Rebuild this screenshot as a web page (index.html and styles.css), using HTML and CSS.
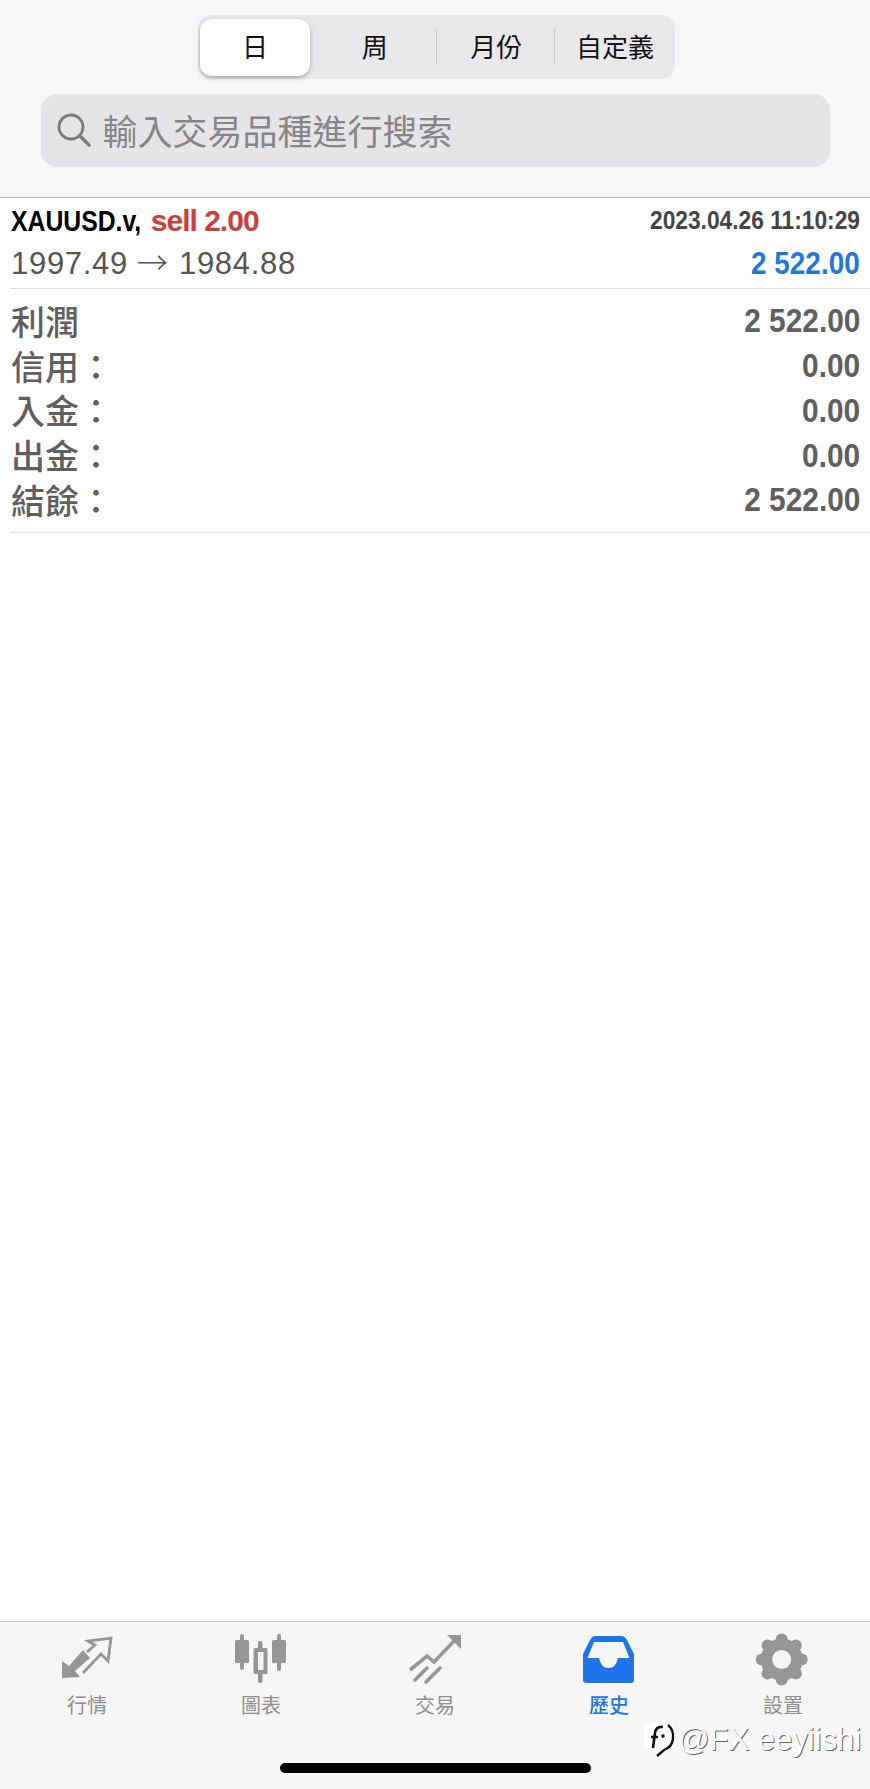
FILE: index.html
```html
<!DOCTYPE html>
<html lang="zh-Hant">
<head>
    <meta charset="UTF-8">
    <meta name="viewport" content="width=device-width, initial-scale=1.0">
    <title>歷史</title>
    <link rel="stylesheet" href="styles.css">
</head>
<body>
    <!-- Period switch and search -->
    <div class="top-bar">
        <div class="segments">
            <div class="segment active">日</div>
            <div class="segment">周</div>
            <div class="segment split">月份</div>
            <div class="segment split">自定義</div>
        </div>
        <div class="search-box">
            <svg class="search-icon" viewBox="0 0 40 40">
                <circle cx="17" cy="16" r="12" fill="none" stroke="#7b7b7b" stroke-width="2.8"/>
                <line x1="26" y1="25" x2="35" y2="34" stroke="#7b7b7b" stroke-width="3.4" stroke-linecap="round"/>
            </svg>
            <span class="search-text">輸入交易品種進行搜索</span>
        </div>
    </div>

    <div class="history-list">
        <div class="trade">
            <div class="row">
                <div class="symbol"><span class="pair">XAUUSD.v,</span><span class="sell">sell 2.00</span></div>
                <div class="date">2023.04.26 11:10:29</div>
            </div>
            <div class="row">
                <div class="prices">1997.49<span class="arrow">→</span>1984.88</div>
                <div class="profit">2 522.00</div>
            </div>
        </div>
        <div class="summary">
            <div class="sum-row"><span class="sum-label">利潤</span><span class="sum-value">2 522.00</span></div>
            <div class="sum-row"><span class="sum-label">信用：</span><span class="sum-value">0.00</span></div>
            <div class="sum-row"><span class="sum-label">入金：</span><span class="sum-value">0.00</span></div>
            <div class="sum-row"><span class="sum-label">出金：</span><span class="sum-value">0.00</span></div>
            <div class="sum-row"><span class="sum-label">結餘：</span><span class="sum-value">2 522.00</span></div>
        </div>
    </div>

    <!-- Bottom navigation -->
    <div class="tab-bar">
        <div class="tabs">
            <div class="tab">
                <svg class="tab-icon" viewBox="-3 0 80 65">
                    <path d="M12 36V53L30 52L25 46L40 33L33 25L19 41Z" fill="#969696"/>
                    <path d="M37 27L45 20L38 16L61 13L58 36L51 29L33 48" fill="none" stroke="#969696" stroke-width="2.8"/>
                </svg>
                <span class="tab-label">行情</span>
            </div>
            <div class="tab">
                <svg class="tab-icon" viewBox="1 0 80 65">
                    <rect x="20" y="9" width="4" height="36" rx="2" fill="#969696"/>
                    <rect x="15" y="15" width="14" height="23" rx="1.5" fill="#969696"/>
                    <rect x="38" y="16" width="4.500" height="42" rx="2" fill="#969696"/>
                    <rect x="33.500" y="23" width="14" height="26" rx="1.500" fill="#969696"/>
                    <rect x="38" y="27" width="5.500" height="18" fill="#f6f6f6"/>
                    <rect x="57" y="9" width="4" height="37" rx="2" fill="#969696"/>
                    <rect x="52" y="15" width="14" height="23" rx="1.500" fill="#969696"/>
                </svg>
                <span class="tab-label">圖表</span>
            </div>
            <div class="tab">
                <svg class="tab-icon" viewBox="0 0 80 65">
                    <path d="M15 45L32 31L39 37L60 15" fill="none" stroke="#969696" stroke-width="3.600"/>
                    <path d="M52 10H66V24Z" fill="#969696"/>
                    <path d="M20 55L32 43M31 57L45 43" fill="none" stroke="#969696" stroke-width="3.600" stroke-linecap="round"/>
                </svg>
                <span class="tab-label">交易</span>
            </div>
            <div class="tab">
                <svg class="tab-icon" viewBox="-1 0 80 65">
                    <path fill="#1f74ea" fill-rule="evenodd" d="M26 11H51Q55 11 57 15L64 29V55Q64 58 61 58H16Q13 58 13 55V29L20 15Q22 11 26 11ZM24 17L17.500 33H29Q31 43 38.500 43Q46 43 48 33H59.500L53 17Z"/>
                </svg>
                <span class="tab-label active">歷史</span>
            </div>
            <div class="tab">
                <svg class="tab-icon" viewBox="2 0 80 65">
                    <g fill="#969696">
                        <circle cx="40.700" cy="34.500" r="21"/>
                        <circle cx="40.700" cy="14.500" r="6"/>
                        <circle cx="40.700" cy="54.500" r="6"/>
                        <circle cx="20.700" cy="34.500" r="6"/>
                        <circle cx="60.700" cy="34.500" r="6"/>
                        <circle cx="26.600" cy="20.400" r="6"/>
                        <circle cx="54.800" cy="20.400" r="6"/>
                        <circle cx="26.600" cy="48.600" r="6"/>
                        <circle cx="54.800" cy="48.600" r="6"/>
                    </g>
                    <circle cx="40.700" cy="34.500" r="9.500" fill="#f6f6f6"/>
                </svg>
                <span class="tab-label">設置</span>
            </div>
        </div>
        <div class="home-bar"></div>
    </div>

    <!-- Watermark over the tab bar -->
    <div class="watermark">
        <svg class="watermark-logo" viewBox="0 0 34 36">
            <path d="M9 1H24Q32 1 32 11V17Q32 27 21 29L12 35L13 29H9Q1 29 1 20V9Q1 1 9 1Z" fill="#fff"/>
            <path d="M25 3Q31 8 30 17Q29 25 21 28L14 34" fill="none" stroke="#111" stroke-width="2.400"/>
            <path d="M8 15H15M20 5Q13 4 12 11L10 26" fill="none" stroke="#111" stroke-width="2.600"/>
            <circle cx="20" cy="14" r="1.800" fill="#111"/>
        </svg>
        <span class="watermark-text">@FX eeyiishi</span>
    </div>
</body>
</html>
```

FILE: styles.css
```css
html, body {
    margin: 0;
    padding: 0;
}

body {
    position: relative;
    display: flex;
    flex-direction: column;
    width: 870px;
    height: 1789px;
    overflow: hidden;
    background-color: #ffffff;
    font-family: "Liberation Sans", "Noto Sans CJK TC", sans-serif;
}

/* Top bar */
.top-bar {
    display: flex;
    flex-direction: column;
    align-items: center;
    height: 198px;
    padding-top: 15px;
    box-sizing: border-box;
    background-color: #f7f7f7;
    border-bottom: 1px solid #b9b9b9;
}

.segments {
    display: flex;
    align-items: center;
    width: 477px;
    height: 64px;
    padding: 0 2px;
    box-sizing: border-box;
    background-color: #e8e8ea;
    border-radius: 14px;
    margin-left: 3px;
}

.segment {
    position: relative;
    width: 120px;
    height: 57px;
    line-height: 53px;
    text-align: center;
    font-family: "Noto Sans CJK TC", sans-serif;
    font-size: 26px;
    color: #111111;
}

.segment.active {
    width: 110px;
    background-color: #ffffff;
    border-radius: 12px;
    box-shadow: 0 2px 4px rgba(0, 0, 0, 0.28);
}

.segment:nth-child(2) {
    width: 126px;
    padding-left: 4px;
    box-sizing: border-box;
}

.segment.split {
    width: 119px;
    padding-left: 3px;
    box-sizing: border-box;
}

.segment.split::before {
    content: "";
    position: absolute;
    left: 0;
    top: 10px;
    width: 1px;
    height: 35px;
    background-color: #c9c9cb;
}

.search-box {
    display: flex;
    align-items: center;
    width: 789px;
    height: 73px;
    margin-top: 15px;
    padding-left: 13px;
    box-sizing: border-box;
    background-color: #e5e5e7;
    border-radius: 16px;
}

.search-icon {
    width: 40px;
    height: 40px;
    flex: none;
}

.search-text {
    margin-left: 9px;
    padding-bottom: 3px;
    font-family: "Noto Sans CJK TC", sans-serif;
    font-size: 35px;
    color: #868688;
}

/* History list */
.history-list {
    flex: 1;
    background-color: #ffffff;
}

.trade {
    margin-left: 10px;
    height: 90px;
    border-bottom: 1px solid #dedede;
}

.row {
    display: flex;
    justify-content: space-between;
    align-items: center;
    height: 44px;
    padding: 0 10px 0 1px;
}

.symbol {
    padding-top: 2px;
    font-size: 30px;
    font-weight: bold;
    color: #000000;
}

/* the symbol, date and amounts are set narrower than the font's own width */
.pair {
    display: inline-block;
    margin-right: -18px;
    transform: scaleX(0.825);
    transform-origin: left center;
}

.sell {
    color: #cb4139;
    letter-spacing: -1px;
}

.date {
    font-size: 26px;
    font-weight: bold;
    color: #444444;
    transform: scaleX(0.875);
    transform-origin: right center;
}

.prices {
    font-size: 31px;
    color: #555555;
    letter-spacing: 0.700px;
}

.arrow {
    margin: 0 11px 0 9px;
    line-height: 0;
    letter-spacing: 0;
    font-family: "Noto Sans CJK TC", sans-serif;
    font-weight: 300;
}

.profit {
    font-size: 31px;
    font-weight: bold;
    color: #2477d8;
    transform: scaleX(0.9);
    transform-origin: right center;
}

.summary {
    margin-left: 10px;
    height: 244px;
    padding-top: 10px;
    box-sizing: border-box;
    border-bottom: 1px solid #dedede;
}

.sum-row {
    display: flex;
    justify-content: space-between;
    align-items: center;
    height: 44.750px;
    padding: 0 10px 0 1px;
    color: #5f5f5f;
}

.sum-label {
    padding-bottom: 2px;
    font-family: "Noto Sans CJK TC", sans-serif;
    font-size: 34px;
    font-weight: 500;
}

.sum-value {
    font-size: 33px;
    font-weight: bold;
    transform: scaleX(0.905);
    transform-origin: right center;
}

/* Bottom navigation */
.tab-bar {
    height: 168px;
    box-sizing: border-box;
    background-color: #f6f6f6;
    border-top: 1px solid #cfcfcf;
}

.tabs {
    display: flex;
    padding-top: 3px;
}

.tab {
    display: flex;
    flex-direction: column;
    align-items: center;
    width: 174px;
}

.tab-icon {
    width: 80px;
    height: 65px;
}

.tab-label {
    margin-top: 1px;
    font-family: "Noto Sans CJK TC", sans-serif;
    font-size: 20px;
    line-height: 28px;
    color: #8e8e8e;
}

.tab-label.active {
    color: #2477d8;
    font-weight: 500;
}

.home-bar {
    width: 311px;
    height: 10px;
    margin: 44px 0 0 280px;
    background-color: #000000;
    border-radius: 5px;
}

.watermark {
    position: absolute;
    left: 643px;
    top: 1722px;
    display: flex;
    align-items: center;
}

.watermark-logo {
    width: 34px;
    height: 36px;
}

.watermark-text {
    margin-left: 1px;
    font-size: 31px;
    line-height: 34px;
    color: #ffffff;
    text-shadow: 1px 1px 0 #666666;
}
```
